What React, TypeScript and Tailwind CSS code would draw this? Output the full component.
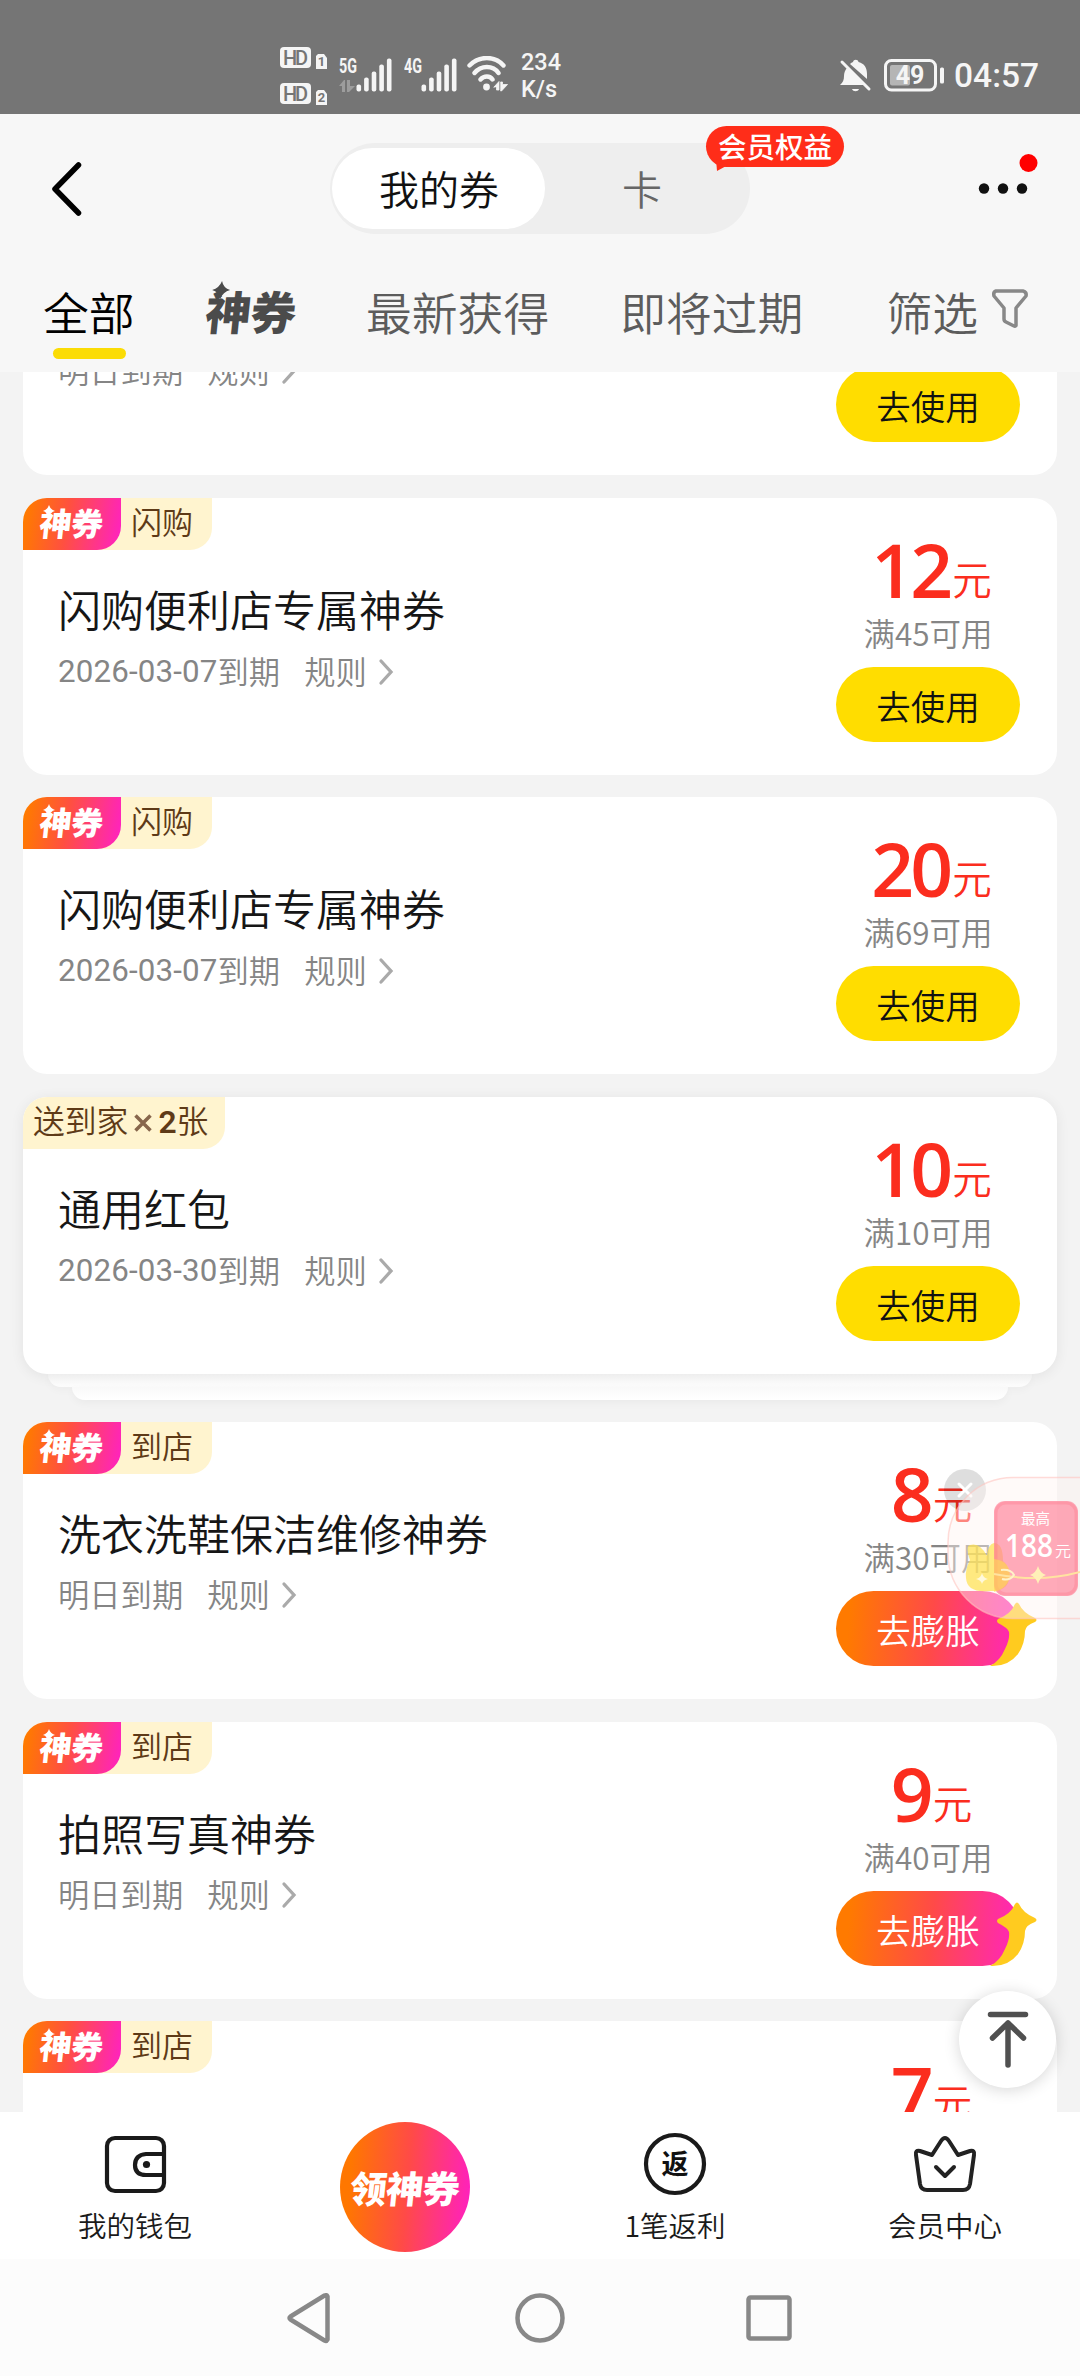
import React from 'react';
import clsx from 'clsx';

interface Coupon {
  title: string;
  date?: string;
  expiry: string;
  tag: string;
  amount: string;
  limit: string;
  count?: number;
  magic?: boolean;
  expand?: boolean;
}

const coupons: Coupon[] = [
  { title: '闪购便利店专属神券', expiry: '明日到期', tag: '闪购', amount: '10', limit: '满38可用', magic: true },
  { title: '闪购便利店专属神券', date: '2026-03-07', expiry: '到期', tag: '闪购', amount: '12', limit: '满45可用', magic: true },
  { title: '闪购便利店专属神券', date: '2026-03-07', expiry: '到期', tag: '闪购', amount: '20', limit: '满69可用', magic: true },
  { title: '通用红包', date: '2026-03-30', expiry: '到期', tag: '送到家', amount: '10', limit: '满10可用', count: 2 },
  { title: '洗衣洗鞋保洁维修神券', expiry: '明日到期', tag: '到店', amount: '8', limit: '满30可用', magic: true, expand: true },
  { title: '拍照写真神券', expiry: '明日到期', tag: '到店', amount: '9', limit: '满40可用', magic: true, expand: true },
  { title: '到店神券', expiry: '明日到期', tag: '到店', amount: '7', limit: '满30可用', magic: true, expand: true },
];

const HdBadge: React.FC<{ sim: string }> = ({ sim }) => (
  <svg width="48" height="23" viewBox="0 0 48 23">
    <rect x="0" y="0" width="31" height="21" rx="4" fill="#f5f5f5" />
    <text x="15.5" y="17.5" textAnchor="middle" fontFamily="Roboto" fontSize="20" fontWeight="500" fill="#757575" textLength="25">HD</text>
    <path d="M38 7h6l3 4v11H36V9z" fill="#f5f5f5" />
    <text x="41.5" y="19" textAnchor="middle" fontFamily="Roboto" fontSize="13" fontWeight="700" fill="#757575">{sim}</text>
  </svg>
);

const Signal: React.FC<{ label: string; data?: boolean }> = ({ label, data }) => (
  <svg width="54" height="36" viewBox="0 0 54 36">
    <text x="0" y="15.5" fontFamily="Roboto" fontSize="20.5" fontWeight="700" fill="#f5f5f5" textLength="18" lengthAdjust="spacingAndGlyphs">{label}</text>
    {data && <path d="M0 29l5-6h1v12H3v-6zM8 23h3v6h5l-6 6H8z" fill="#9d9d9d" />}
    {[7, 14, 20, 27, 33].map((h, i) => (
      <rect key={h} x={17.5 + i * 7.6} y={34.5 - h} width="4.6" height={h} rx="2" fill="#f5f5f5" />
    ))}
  </svg>
);

const StatusBar = () => (
  <div className="flex h-[114px] bg-[#757575] font-['Roboto',sans-serif] text-[#f5f5f5]">
    <div className="ml-[280px] mt-[47px] flex flex-col gap-[13px]">
      <HdBadge sim="1" />
      <HdBadge sim="2" />
    </div>
    <div className="ml-[11px] mt-[56.500px]"><Signal label="5G" data /></div>
    <div className="ml-[11px] mt-[56.500px]"><Signal label="4G" /></div>
    <svg className="ml-[9px] mt-[56px]" width="42" height="36" viewBox="0 0 42 36" fill="none" stroke="#f5f5f5" strokeWidth="4.4" strokeLinecap="round">
      <path d="M2.500 9.500C12-.5 28-.5 36.500 9.500M7.500 17C14 9 26 9 31.500 17M13.500 23.500c3.500-4 9.500-4 12 0" />
      <circle cx="19.500" cy="31" r="3.400" fill="#f5f5f5" stroke="none" />
      <path d="M27 31l5-5.500V34h-2.500v-3zM34 26l1.500 0v2.500h5L34.500 35H34z" fill="#f5f5f5" stroke="#f5f5f5" strokeWidth="0.8" />
    </svg>
    <div className="ml-[12px] mt-[49px] text-[23.500px] leading-[27px] font-medium">
      234
      <br />
      K/s
    </div>
    <svg className="ml-[278px] mt-[58px]" width="33" height="34" viewBox="0 0 33 34">
      <path d="M8 10l17 17H1c3-3 4-5 4-9 0-3 1-6 3-8zM11 6c1-1 2-1.500 3-2 .500-3 5-3 5.500 0 6 1.500 8.500 6 8.500 12v5z" fill="#f5f5f5" />
      <path d="M3 4l27 27" stroke="#f5f5f5" strokeWidth="3" strokeLinecap="round" />
      <path d="M13 31h7c-1 3-6 3-7 0z" fill="#f5f5f5" />
    </svg>
    <svg className="ml-[12px] mt-[59px]" width="61" height="33" viewBox="0 0 61 33">
      <rect x="1.500" y="1.500" width="50" height="29.500" rx="6" fill="none" stroke="#f5f5f5" strokeWidth="3" />
      <rect x="6" y="6" width="20" height="20.500" rx="2" fill="#b5b5b5" />
      <rect x="56" y="8.500" width="4" height="16" rx="1.500" fill="#f5f5f5" />
      <text x="26" y="24.500" textAnchor="middle" fontFamily="Roboto" fontSize="25" fontWeight="700" fill="#f5f5f5">49</text>
    </svg>
    <div className="ml-[9px] mt-[56px] text-[33.500px] leading-[40px] font-medium">04:57</div>
  </div>
);

const Header = () => (
  <header className="h-[258px] bg-[#f7f7f7]">
    <div className="flex h-[148px] pt-[29px]">
      <svg className="ml-[48px] mt-[17px]" width="38" height="58" viewBox="0 0 38 58">
        <path d="M30.500 5L7 29l23.500 24" fill="none" stroke="#000" strokeWidth="5.500" strokeLinecap="round" strokeLinejoin="round" />
      </svg>
      <div className="relative ml-[244px] flex h-[91px] w-[420px] rounded-full bg-[#eeeeee] p-[2px] pt-[5px]">
        <div className="h-[81px] w-[213px] rounded-full bg-white pl-[1px] text-center text-[40px] leading-[81px] text-[#111]">我的券</div>
        <div className="w-[194px] text-center text-[40px] leading-[81px] text-[#666]">卡</div>
        <div className="absolute left-[376px] top-[-17px] h-[41px] w-[138px] rounded-full bg-[#ff2d19] text-center text-[28.500px] leading-[39px] font-medium whitespace-nowrap text-white">
          会员权益
          <svg className="absolute bottom-[-4px] left-[10px]" width="14" height="12" viewBox="0 0 14 12">
            <path d="M0 0l1 12 11-6z" fill="#ff2d19" />
          </svg>
        </div>
      </div>
      <svg className="ml-[226px] mt-[8px]" width="64" height="50" viewBox="0 0 64 50">
        <circle cx="8" cy="37.500" r="5.200" fill="#111" />
        <circle cx="27" cy="37.500" r="5.200" fill="#111" />
        <circle cx="46" cy="37.500" r="5.200" fill="#111" />
        <circle cx="52.500" cy="12" r="9" fill="#f00" />
      </svg>
    </div>
    <nav className="flex text-[45.800px] leading-[60px] text-[#5c5c5c]">
      <div className="ml-[43px] mt-[19px] w-[92px] text-black">
        全部
        <div className="mt-[7px] ml-[10px] h-[11px] w-[73px] rounded-full bg-[#fbdc05]" />
      </div>
      <div className="relative ml-[70px] mt-[18px] w-[92px] -skew-x-6 text-[45.500px] font-black tracking-[-0.500px] text-[#4b4b4b]">
        神券
        <svg className="absolute left-[4px] top-[1px]" width="18" height="18" viewBox="0 0 18 18">
          <path d="M9 0q2 7 9 9-7 2-9 9-2-7-9-9 7-2 9-9z" fill="#4b4b4b" />
        </svg>
      </div>
      <div className="ml-[69px] mt-[19px]">最新获得</div>
      <div className="ml-[71px] mt-[19px]">即将过期</div>
      <div className="ml-[83px] mt-[19px]">筛选</div>
      <svg className="ml-[13px] mt-[26px]" width="38" height="42" viewBox="0 0 38 42">
        <path d="M5 3h27q4 1 3 5L25 20v17.500q-1 1-2 .5l-8-4q-2-1-2-3V20L3 8Q2 4 5 3z" fill="none" stroke="#888" strokeWidth="3.500" strokeLinejoin="round" />
      </svg>
    </nav>
  </header>
);

const MagicTag = () => (
  <div className="relative h-[52px] w-[98px] rounded-tl-[24px] rounded-br-[24px] bg-[linear-gradient(100deg,#ff7a00_5%,#ff5040_45%,#ff22c0_98%)]">
    <div className="ml-[17px] w-[66px] -skew-x-6 text-[32px] leading-[49px] font-black tracking-[-0.500px] text-white">神券</div>
    <svg className="absolute left-[20px] top-[7px]" width="12" height="12" viewBox="0 0 18 18">
      <path d="M9 0q2 7 9 9-7 2-9 9-2-7-9-9 7-2 9-9z" fill="#fff" />
    </svg>
  </div>
);

const CouponCard: React.FC<{ coupon: Coupon }> = ({ coupon }) => (
  <div
    className={clsx(
      'relative flex h-[277px] justify-between rounded-[24px] bg-white',
      coupon.count && 'shadow-[0_2px_14px_rgba(0,0,0,0.07)]',
    )}
  >
    <div>
      {coupon.magic ? (
        <div className="flex h-[52px] w-[189px] rounded-tl-[24px] rounded-br-[22px] bg-[#fff4cf]">
          <MagicTag />
          <span className="ml-[10px] text-[31px] leading-[46px] text-[#5e3a17]">{coupon.tag}</span>
        </div>
      ) : (
        <div className="flex h-[52px] w-[202px] items-start rounded-tl-[24px] rounded-br-[22px] bg-[#fff4cf] pl-[10px] text-[31.800px] leading-[45px] text-[#5e3a17]">
          {coupon.tag}
          <svg className="ml-[6px] mt-[17px]" width="18" height="18" viewBox="0 0 18 18">
            <path d="M1.500 1.500l15 15M16.500 1.500l-15 15" stroke="#87664c" strokeWidth="3.500" />
          </svg>
          <span className="ml-[6px] font-['Roboto',sans-serif] leading-[51px] font-semibold">{coupon.count}</span>
          张
        </div>
      )}
      <h2 className="ml-[35px] mt-[28px] text-[43px] leading-[60px] text-[#161616]">{coupon.title}</h2>
      <div className="ml-[35px] mt-[10px] flex items-center text-[31.300px] leading-[44px] text-[#858585]">
        {coupon.date && (
          <span className="mt-[2px] font-['Roboto',sans-serif] font-normal tracking-[0.150px]">{coupon.date}</span>
        )}
        <span>{coupon.expiry}</span>
        <span className="ml-[24px]">规则</span>
        <svg className="ml-[11px] mt-[2px]" width="16" height="28" viewBox="0 0 16 28">
          <path d="M3 3l10 11L3 25" fill="none" stroke="#aaa" strokeWidth="3.300" strokeLinecap="round" />
        </svg>
      </div>
    </div>
    <div className="mr-[37px] w-[184px] pt-[41px] text-center">
      <div className="flex h-[60px] items-baseline justify-center pl-[7px] leading-[60px] text-[#fb2d1e]">
        <span className="font-['Open_Sans',sans-serif] text-[75px] font-semibold tracking-[-4px]">{coupon.amount}</span>
        <span className="relative top-[-3px] ml-[3px] text-[39.500px]">元</span>
      </div>
      <div className="mt-[15px] text-[31.500px] leading-[36px] text-[#858585]">{coupon.limit}</div>
      {coupon.expand ? (
        <div className="relative mt-[17px] h-[75px] rounded-full bg-[linear-gradient(95deg,#ff7a00_8%,#ff4a48_52%,#ff28b4_95%)] text-[34.500px] leading-[76px] text-white">
          去膨胀
          <svg className="absolute right-[-19px] top-[9px]" width="50" height="68" viewBox="0 0 50 68">
            <path
              d="M26 4q2-3 4 0 4 9 16 14 3 2 0 4-9 3-10 9 0 13-7 23-10 13-28 12 10-5 15-17 5-10 4-17-1-4-11-9-2-2 0-4 13-5 17-15z"
              fill="#ffcb1f"
            />
          </svg>
        </div>
      ) : (
        <div className="mt-[17px] h-[75px] rounded-full bg-[#ffdd00] text-[34.500px] leading-[76px] text-[#111]">去使用</div>
      )}
    </div>
  </div>
);

// Edges of the coupons stacked below a multi-count card
const StackEdges = () => (
  <div className="flex flex-col items-center">
    <div className="h-[13px] w-[984px] rounded-b-[24px] bg-[linear-gradient(#f8f8f8,#fdfdfd)] shadow-[0_3px_8px_rgba(0,0,0,0.03)]" />
    <div className="h-[13px] w-[936px] rounded-b-[24px] bg-[linear-gradient(#f9f9f9,#ffffff)] shadow-[0_3px_8px_rgba(0,0,0,0.04)]" />
  </div>
);

const PromoFloat = () => (
  <div className="absolute left-[944px] top-[1468px] h-[155px] w-[136px] overflow-hidden">
    <svg width="136" height="155" viewBox="0 0 136 155">
      <circle cx="21" cy="22" r="21" fill="#000" fillOpacity="0.13" />
      <path d="M15 16l12 12M27 16L15 28" stroke="#fff" strokeWidth="3" strokeLinecap="round" />
      <rect x="4" y="9.500" width="240" height="141" rx="65" fill="#fff4f2" fillOpacity="0.45" stroke="#ffc4bf" strokeOpacity="0.6" strokeWidth="1.500" />
      <path d="M26 92q-5-14 0-15 10-3 17 11 1-12 7-13 9 0 9 18 8 6 6 19-3 12-20 11-22 2-23-13-1-9 4-18z" fill="#ffe14d" fillOpacity="0.7" />
      <rect x="50" y="33" width="84" height="95" rx="11" fill="#ff8096" fillOpacity="0.65" />
      <rect x="52" y="35" width="80" height="91" rx="10" fill="none" stroke="#ff7086" strokeOpacity="0.3" strokeWidth="3" />
      <path d="M50 91q16 2 16 17-2 12-16 16z" fill="#ffe14d" fillOpacity="0.55" />
      <path d="M50 106q46 9 86-2" fill="none" stroke="#ffe3a0" strokeWidth="2" />
      <path d="M94 98q2 7 8 9-6 2-8 9-2-7-8-9 6-2 8-9z" fill="#fff0b8" />
      <path d="M38 105q1 5 6 6-5 1-6 5-1-4-6-5 5-1 6-6z" fill="#fff9dc" />
      <path d="M57 102q10-1 13 5-4 6-12 4" fill="none" stroke="#fff2c8" strokeWidth="2" />
      <text x="91.500" y="55.500" textAnchor="middle" fontFamily="Noto Sans CJK SC" fontSize="14.500" fontWeight="400" fill="#fff">最高</text>
      <text x="85" y="89" textAnchor="middle" fontFamily="Open Sans" fontSize="32" fontWeight="600" fill="#fff" textLength="48" lengthAdjust="spacingAndGlyphs">188</text>
      <text x="119" y="89" textAnchor="middle" fontFamily="Noto Sans CJK SC" fontSize="16" fill="#fff">元</text>
    </svg>
  </div>
);

const BackToTop = () => (
  <div className="absolute left-[959px] top-[1991px] h-[97px] w-[97px] rounded-full bg-white shadow-[0_2px_16px_rgba(0,0,0,0.16)]">
    <svg width="97" height="97" viewBox="0 0 97 97" fill="none" stroke="#505050" strokeWidth="5.500" strokeLinecap="round" strokeLinejoin="round">
      <path d="M31.500 23.500h35M49 74V32M33.500 47L49 32l15.500 15" />
    </svg>
  </div>
);

const BottomNav = () => (
  <nav className="grid h-[147px] grid-cols-4 bg-white text-center text-[28.500px] leading-[40px] text-[#1a1a1a]">
    <div className="flex flex-col items-center pt-[20px]">
      <svg width="64" height="64" viewBox="0 0 64 64" fill="none" stroke="#1a1a1a" strokeWidth="4.200">
        <rect x="4" y="6" width="57" height="53" rx="8" />
        <path d="M60 22H43q-11 1-11 11t11 10h17" />
        <circle cx="43.500" cy="32.500" r="3.600" fill="#1a1a1a" stroke="none" />
      </svg>
      <span className="mt-[9px]">我的钱包</span>
    </div>
    <div className="flex justify-center pt-[10px]">
      <div className="h-[130px] w-[130px] rounded-full bg-[linear-gradient(95deg,#ff7700_10%,#ff4a48_52%,#ff20c0_98%)]">
        <div className="-skew-x-6 text-[37px] leading-[130px] font-black tracking-[-0.500px] text-white">领神券</div>
      </div>
    </div>
    <div className="flex flex-col items-center pt-[20px]">
      <svg width="64" height="64" viewBox="0 0 64 64">
        <circle cx="32" cy="32" r="29" fill="none" stroke="#1a1a1a" strokeWidth="4.200" />
        <text x="32" y="42" textAnchor="middle" fontFamily="Noto Sans CJK SC" fontSize="27" fontWeight="700" fill="#111">返</text>
      </svg>
      <span className="mt-[9px]">1笔返利</span>
    </div>
    <div className="flex flex-col items-center pt-[20px]">
      <svg width="64" height="64" viewBox="0 0 64 64" fill="none" stroke="#222" strokeWidth="4" strokeLinecap="round" strokeLinejoin="round">
        <path d="M3 23q-1-5 4-4l12 4 9-14q4-6 8 0l9 14 12-4q5-1 4 4l-4 29q-1 6-7 6H14q-6 0-7-6z" />
        <path d="M23 35l9 9 9-9" />
      </svg>
      <span className="mt-[9px]">会员中心</span>
    </div>
  </nav>
);

const SystemNav = () => (
  <div className="flex h-[117px] bg-[#fcfcfc] pt-[31px]">
    <svg className="ml-[284px]" width="50" height="56" viewBox="0 0 50 56">
      <path d="M43.500 6.500v43q-1 2-3 1L6.500 29.500q-2-1.500 0-3L40.500 5.500q2-1 3 1z" fill="none" stroke="#888" strokeWidth="4.500" strokeLinejoin="round" />
    </svg>
    <svg className="ml-[178px]" width="56" height="56" viewBox="0 0 56 56">
      <circle cx="28" cy="28" r="22.500" fill="none" stroke="#888" strokeWidth="4.500" />
    </svg>
    <svg className="ml-[173px]" width="56" height="56" viewBox="0 0 56 56">
      <rect x="7.500" y="7.500" width="41" height="41" rx="2" fill="none" stroke="#888" strokeWidth="4.500" />
    </svg>
  </div>
);

export default function App() {
  return (
    <div className="relative h-[2376px] w-[1080px] overflow-hidden bg-[#f3f3f3] font-['Noto_Sans_CJK_SC',sans-serif] font-[350]">
      <StatusBar />
      <Header />
      <main className="h-[1740px] overflow-hidden px-[23px]">
        <div className="mt-[-174px] flex flex-col gap-[22.500px]">
          {coupons.map((coupon, i) => (
            <div key={i}>
              <CouponCard coupon={coupon} />
              {coupon.count && <StackEdges />}
            </div>
          ))}
        </div>
      </main>
      <BottomNav />
      <SystemNav />
      <PromoFloat />
      <BackToTop />
    </div>
  );
}
